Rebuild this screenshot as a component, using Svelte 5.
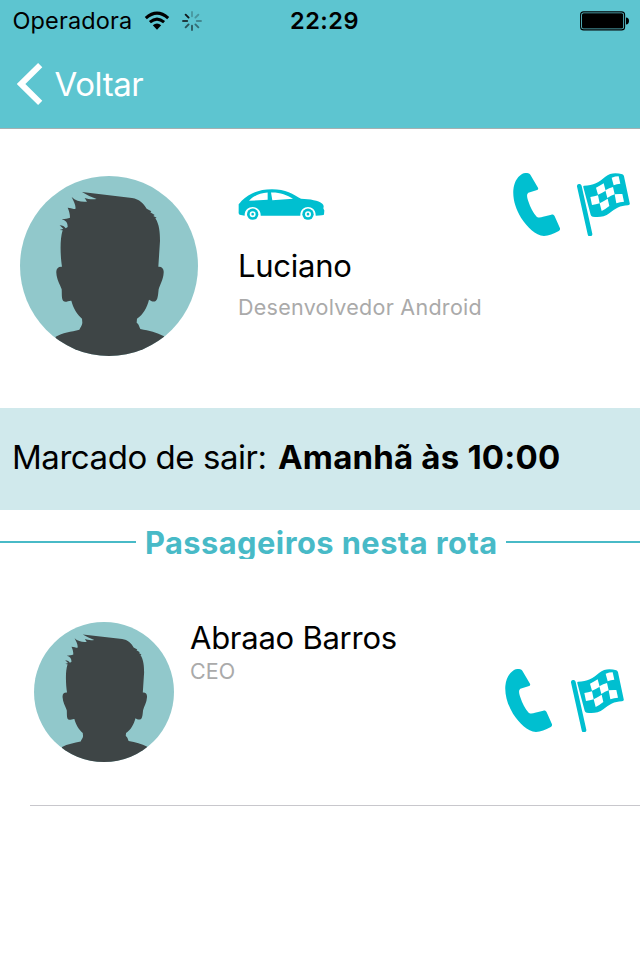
<script>
  const driver = { name: 'Luciano', role: 'Desenvolvedor Android' };
  const passengers = [{ name: 'Abraao Barros', role: 'CEO' }];
  const spokes = [0.25, 0.28, 0.35, 0.5, 0.6, 0.65, 0.8, 1];
</script>

{#snippet avatar()}
  <svg class="avatar" viewBox="30 30 534 540" preserveAspectRatio="none" aria-hidden="true">
    <clipPath id="disc"><ellipse cx="297" cy="300" rx="267" ry="270" /></clipPath>
    <g clip-path="url(#disc)">
      <rect x="30" y="30" width="534" height="540" fill="#91c8cb" />
      <path
        fill="#3e4546"
        d="M216 78L366 96C388 99 402 114 410 128L424 136L421 139L434 147L430 150L440 155L436 157C448 175 450 200 450 225L445 302C456 301 462 308 461 320C460 340 450 355 446 370C444 390 443 401 437 405C430 409 422 404 417 401C411 425 399 446 381 458L380 470C387 474 388 483 391 489C418 494 440 499 462 511L470 580H130L137 512C157 500 184 497 208 491C211 483 217 478 217 470L216 458C202 446 189 425 184 404C175 403 167 411 160 405C154 400 156 380 155 370C149 353 140 340 139 320C138 308 144 301 156 302C151 270 149 220 158 193L149 192L160 188L149 178C158 178 163 182 167 187L173 183C173 170 167 163 155 160C166 158 174 158 180 155C180 143 177 134 173 125C182 126 190 129 196 129C199 118 190 105 185 93C197 105 215 109 231 107C228 103 227 100 224 96C235 100 248 101 260 99C245 93 230 87 216 78Z"
      />
    </g>
  </svg>
{/snippet}

{#snippet actions()}
  <svg class="phone" viewBox="39 24 141 189" aria-hidden="true">
    <path
      fill="#00bfd0"
      d="M66 27C74 23 86 22 91 29L114 68C116 72 113 75 109 76L85 83C79 88 81 98 85 109C91 128 99 143 110 155C117 160 123 157 129 155L154 149C159 148 162 150 164 154L180 190C181 194 179 197 175 199C161 207 146 213 132 213C106 211 82 187 63 158C48 133 38 105 40 75C42 55 49 38 66 27Z"
    />
  </svg>
  <svg class="flag" viewBox="231 24 159 189" aria-hidden="true">
    <path d="M238 64L270 207" stroke="#00bfd0" stroke-width="14" stroke-linecap="round" />
    <path
      fill="#00bfd0"
      d="M252 62C280 62 298 51 315 36C332 22 350 23 367 28Q371 29 372 34L389 114Q391 120 384 121C361 121 345 132 329 144C313 156 296 158 278 155Q273 154 272 149L250 67Q249 62 252 62Z"
    />
    <g fill="#fff">
      <path d="M335 38Q346 34 356 34L361 56Q350 57 341 61Z" />
      <path d="M288 68Q301 62 311 55L317 77Q306 84 294 89Z" />
      <path d="M316 76Q328 69 339 66L344 88Q333 92 322 99Z" />
      <path d="M271 96Q283 95 294 91L299 115Q288 119 276 120Z" />
      <path d="M299 115Q312 108 323 101L328 123Q317 132 305 138Z" />
      <path d="M344 88Q357 86 367 87L372 110Q360 110 349 115Z" />
    </g>
  </svg>
{/snippet}

<main>
  <header>
    <div class="status">
      <div class="side">
        <span class="carrier">Operadora</span>
        <svg class="wifi" width="26" height="20" viewBox="0 0 26 20" fill="none" stroke="#000">
          <path d="M1.8 7.2Q13 -2.8 24.2 7.2" stroke-width="3.1" />
          <path d="M5.9 11.2Q13 5 20.1 11.2" stroke-width="3" />
          <path d="M8.8 14.3Q13 10.8 17.2 14.3L13 18.8Z" fill="#000" stroke="none" />
        </svg>
        <svg class="spinner" width="20" height="20" viewBox="-10 -10 20 20">
          {#each spokes as opacity, i}
            <path
              d="M0 -4.8V-9"
              stroke="#10181a"
              stroke-width="1.9"
              stroke-linecap="round"
              {opacity}
              transform="rotate({i * 45})"
            />
          {/each}
        </svg>
      </div>
      <span class="clock">22:29</span>
      <div class="side end">
        <svg width="50" height="20" viewBox="0 0 50 20">
          <rect x="0.6" y="0.9" width="44" height="18" rx="3" fill="none" stroke="#000" stroke-width="1.1" />
          <rect x="2" y="2.3" width="41.2" height="15.2" rx="1.5" />
          <path d="M46 6.6Q49 7 49 10T46 13.6Z" />
        </svg>
      </div>
    </div>
    <nav>
      <svg width="26" height="42" viewBox="0 0 26 42">
        <path d="M23.2 2.2L4 21L23.2 39.8" fill="none" stroke="#fff" stroke-width="6" />
      </svg>
      <span class="back">Voltar</span>
    </nav>
  </header>

  <section class="driver">
    {@render avatar()}
    <div class="info">
      <svg class="car" width="87" height="31" viewBox="23 27 261 92">
        <path
          fill="#00bfd0"
          d="M25 72Q30 67 34 62C57 40 85 27 125 27C165 27 190 42 212 56C240 57 264 61 276 71Q282 76 279 84L282 91L281 103Q280 106 256 107C258 72 208 72 210 107H91C93 72 41 72 43 107L28 104Q24 103 25 94Z"
        />
        <path fill="#fff" d="M112 37V59L56 62C69 47 89 39 112 37ZM122 37C147 36 170 44 188 56L126 60Z" />
        {#each [67, 233] as cx}
          <circle {cx} cy="102" r="17" fill="#00bfd0" />
          <circle {cx} cy="102" r="6.5" fill="#00bfd0" stroke="#fff" stroke-width="5" />
        {/each}
      </svg>
      <span class="name">{driver.name}</span>
      <span class="role">{driver.role}</span>
    </div>
    <div class="actions">{@render actions()}</div>
  </section>

  <section class="departure">
    <span class="label">Marcado de sair:</span>
    <strong>Amanhã às 10:00</strong>
  </section>

  <div class="divider">
    <i></i>
    <h2>Passageiros nesta rota</h2>
    <i></i>
  </div>

  {#each passengers as p}
    <section class="passenger">
      {@render avatar()}
      <div class="info">
        <span class="name">{p.name}</span>
        <span class="role">{p.role}</span>
      </div>
      <div class="actions">{@render actions()}</div>
    </section>
  {/each}
</main>

<style>
  :global(body) {
    margin: 0;
    background: #fff;
  }
  main {
    width: 640px;
    height: 960px;
    overflow: hidden;
    background: #fff;
    color: #000;
    font-family: Inter, "Liberation Sans", sans-serif;
    white-space: nowrap;
  }
  svg {
    display: block;
    flex: none;
  }
  header {
    box-sizing: border-box;
    height: 129px;
    background: #5dc5d0;
    border-bottom: 1px solid #a5b0b2;
  }
  .status {
    display: flex;
    align-items: center;
    height: 41px;
    padding: 0 10px 0 12.5px;
  }
  .side {
    display: flex;
    align-items: center;
    width: 277.5px;
  }
  .end {
    flex: 1;
    justify-content: flex-end;
  }
  .carrier {
    width: 131.5px;
    font-size: 23.5px;
    line-height: 41px;
    letter-spacing: 0.12px;
  }
  .wifi {
    margin-right: 12px;
  }
  .clock {
    font-size: 23.5px;
    line-height: 41px;
    font-weight: 600;
    letter-spacing: 0.5px;
  }
  nav {
    display: flex;
    align-items: center;
    gap: 12px;
    height: 85px;
    padding-left: 16.5px;
  }
  .back {
    color: #fff;
    font-size: 33px;
    line-height: 40px;
    letter-spacing: -0.4px;
  }
  .driver {
    display: flex;
    height: 279px;
  }
  .driver .avatar {
    width: 178px;
    height: 180px;
    margin: 47px 40px 0 20px;
  }
  .driver .info {
    display: flex;
    flex-direction: column;
    padding-top: 60px;
    width: 275px;
  }
  .driver .name {
    margin-top: 26px;
  }
  .driver .role {
    margin-top: 6px;
    letter-spacing: 0.27px;
  }
  .name {
    font-size: 31px;
    line-height: 40px;
    letter-spacing: -0.25px;
  }
  .role {
    color: #aaa;
    font-size: 21.5px;
    line-height: 30px;
  }
  .actions {
    display: flex;
    gap: 17px;
  }
  .driver .actions {
    padding-top: 44px;
  }
  .phone {
    width: 47px;
    height: 63px;
  }
  .flag {
    width: 53px;
    height: 63px;
  }
  .departure {
    box-sizing: border-box;
    display: flex;
    height: 102px;
    padding-left: 12px;
    background: #d0e9ec;
    font-size: 33px;
    line-height: 98px;
  }
  .label {
    width: 266px;
    letter-spacing: -0.45px;
  }
  strong {
    letter-spacing: 0.2px;
  }
  .divider {
    display: flex;
    gap: 10px;
    height: 49px;
    padding-top: 15px;
    box-sizing: border-box;
    overflow: hidden;
  }
  .divider i {
    flex: 1;
    height: 2px;
    margin-top: 16px;
    background: #48bac7;
  }
  .divider i:first-child {
    flex: 0 0 136px;
  }
  h2 {
    margin: 0 0 0 -1px;
    width: 351px;
    color: #48bac7;
    font-size: 30.8px;
    line-height: 35px;
    font-weight: 700;
    letter-spacing: 0.46px;
  }
  .passenger {
    display: flex;
    box-sizing: border-box;
    height: 247px;
    margin-left: 30px;
    border-bottom: 1px solid #c8c7cc;
  }
  .passenger .avatar {
    width: 140px;
    height: 140px;
    margin: 63px 16px 0 4px;
  }
  .passenger .info {
    display: flex;
    flex-direction: column;
    padding-top: 59px;
    width: 315px;
  }
  .passenger .role {
    margin-top: -2px;
  }
  .passenger .actions {
    padding-top: 110px;
    gap: 19px;
  }
</style>
